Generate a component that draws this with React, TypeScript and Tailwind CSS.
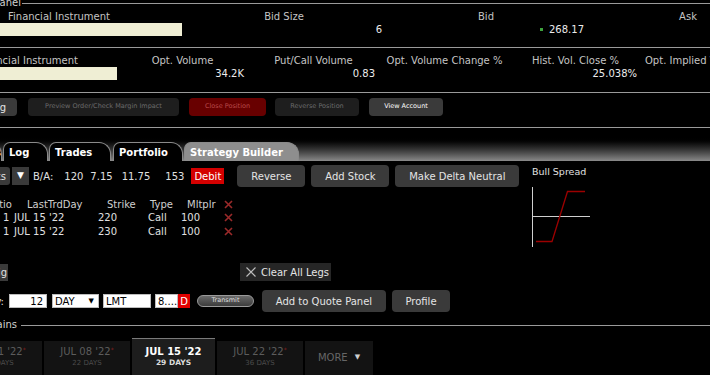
import type { ReactNode } from "react";

function Clip({ className, children }: { className: string; children: ReactNode }) {
  return <div className={`flex shrink-0 justify-end overflow-hidden whitespace-nowrap ${className}`}>{children}</div>;
}

function QuoteCell({ label, value, className = "w-[202px]" }: { label: string; value?: ReactNode; className?: string }) {
  return (
    <div className={`shrink-0 ${className}`}>
      <div className="h-[11px] text-center leading-[11px] whitespace-nowrap text-[#c4c4c4]">{label}</div>
      <div className="mt-px flex h-[13px] items-center justify-end pr-[3px] leading-[13px] text-[#ececec]">{value}</div>
    </div>
  );
}

function StatCell({ label, value, left }: { label: string; value?: string; left?: boolean }) {
  return (
    <div className="w-[131px] shrink-0">
      <div className={`h-[11px] leading-[11px] whitespace-nowrap text-[#c4c4c4] ${left ? "pl-[4px]" : "text-center"}`}>{label}</div>
      <div className="mt-px h-[13px] pr-[4px] text-right leading-[13px] text-[#ececec]">{value}</div>
    </div>
  );
}

function Tab({ label, active, className }: { label: string; active?: boolean; className: string }) {
  return (
    <div
      className={`flex h-[19px] shrink-0 items-center rounded-tl-[7px] rounded-tr-[12px] border-x border-t border-[#8a8a8a] pt-px text-[10px] font-bold whitespace-nowrap ${
        active ? "bg-[#8e8e8e] text-white" : "bg-black text-white"
      } ${className}`}
    >
      {label}
    </div>
  );
}

function DateTab({ date, days, star, active, className }: { date: string; days: string; star?: boolean; active?: boolean; className: string }) {
  return (
    <div
      className={`flex shrink-0 flex-col items-center ${
        active ? "h-[40px] border-t border-[#7a7a7a] bg-[#1d1d1d] pt-[7px]" : "h-[37px] bg-[#131313] pt-[5px]"
      } ${className}`}
    >
      <div className={`h-[12px] leading-[12px] whitespace-nowrap ${active ? "text-[10px] font-bold text-white" : "text-[10px] text-[#5c5c5c]"}`}>
        {date}
        {star ? <span className="relative -top-[3px] text-[6px] text-[#8a2020]">*</span> : null}
      </div>
      <div className={`h-[10px] leading-[10px] ${active ? "text-[7.5px] font-bold text-[#dcdcdc]" : "text-[7px] text-[#4c4c4c]"}`}>{days}</div>
    </div>
  );
}

const greyBtn = "flex shrink-0 items-center justify-center rounded-[4px] bg-[#3a3a3a] text-[10px] text-[#e4e4e4] whitespace-nowrap";

function RedX() {
  return (
    <svg width="9" height="9" viewBox="0 0 9 9">
      <path d="M1 1 L8 8 M8 1 L1 8" stroke="#9a2a2a" strokeWidth="1.6" />
    </svg>
  );
}

export default function App() {
  return (
    <div className="h-[375px] w-[710px] overflow-hidden bg-black font-['DejaVu_Sans',sans-serif] text-[10px] text-[#e0e0e0]">
      {/* quote panel */}
      <div className="-mt-[2px] flex h-[10px] items-center">
        <Clip className="w-[21px]">
          <span className="leading-[10px] text-[#d0d0d0]">Quote Panel</span>
        </Clip>
        <div className="ml-px h-px flex-1 bg-[#9a9a9a]" />
      </div>

      <div className="mt-[3px] flex">
        <div className="w-[183px] shrink-0">
          <div className="h-[11px] pl-2 leading-[11px] text-[#c4c4c4]">Financial Instrument</div>
          <div className="mt-px h-[13px] w-[182px] bg-[#efeed4]" />
        </div>
        <QuoteCell label="Bid Size" value="6" />
        <QuoteCell
          label="Bid"
          value={
            <>
              <span className="mr-[6px] h-[3px] w-[3px] bg-[#3ea33e]" />
              268.17
            </>
          }
        />
        <QuoteCell label="Ask" />
      </div>

      <div className="mt-[11px] h-px bg-[#9a9a9a]" />

      <div className="mt-[7px] flex">
        <div className="-ml-[32px] w-[149px] shrink-0">
          <div className="h-[11px] pl-2 leading-[11px] text-[#c4c4c4] whitespace-nowrap">Financial Instrument</div>
          <div className="mt-px h-[13px] w-[149px] bg-[#efeed4]" />
        </div>
        <StatCell label="Opt. Volume" value="34.2K" />
        <StatCell label="Put/Call Volume" value="0.83" />
        <StatCell label="Opt. Volume Change %" />
        <StatCell label="Hist. Vol. Close %" value="25.038%" />
        <StatCell label="Opt. Implied Vol. %" left />
      </div>

      <div className="mt-[12px] h-px bg-[#9a9a9a]" />

      {/* order buttons */}
      <div className="mt-[5px] flex h-[18px] items-center text-[6.5px]">
        <Clip className="w-[17px]">
          <div className="flex h-[18px] w-[70px] items-center justify-end rounded-[4px] bg-[#3a3a3a] pr-[11px] text-[10px] text-[#e4e4e4]">Order Log</div>
        </Clip>
        <div className="ml-[11px] flex h-[18px] w-[151px] items-center justify-center rounded-[4px] bg-[#1e1e1e] text-[#6c6c6c]">Preview Order/Check Margin Impact</div>
        <div className="ml-[10px] flex h-[18px] w-[77px] items-center justify-center rounded-[4px] bg-[#680000] text-[#b84a4a]">Close Position</div>
        <div className="ml-[9px] flex h-[18px] w-[84px] items-center justify-center rounded-[4px] bg-[#1e1e1e] text-[#6c6c6c]">Reverse Position</div>
        <div className="ml-[10px] flex h-[18px] w-[74px] items-center justify-center rounded-[4px] bg-[#3a3a3a] text-white">View Account</div>
      </div>

      <div className="mt-[11px] h-px bg-[#9a9a9a]" />

      {/* tab bar */}
      <div className="mt-[9px] flex h-[24px] items-end gap-px bg-linear-to-b from-black to-[#8a8a8a]">
        <Tab label="Orders" className="-ml-[40px] w-[42px] justify-end" />
        <Tab label="Log" className="w-[45px] pl-[5px]" />
        <Tab label="Trades" className="w-[62px] pl-[5px]" />
        <Tab label="Portfolio" className="ml-px w-[70px] pl-[5px]" />
        <Tab label="Strategy Builder" active className="w-[115px] pl-[5px]" />
      </div>

      {/* strategy builder */}
      <div className="mt-[4px] flex">
        <div className="w-[525px] shrink-0">
          <div className="flex h-[22px] items-center">
            <Clip className="w-[10px]">
              <div className="flex h-[18px] w-[48px] items-center justify-end rounded-[3px] bg-[#3a3a3a] pr-[4px]">Stocks</div>
            </Clip>
            <div className="ml-[2px] flex h-[18px] w-[17px] items-center justify-center bg-[#3a3a3a] text-[9px] text-white">▼</div>
            <span className="ml-[4px]">B/A:</span>
            <span className="ml-[11px]">120</span>
            <span className="ml-[7px]">7.15</span>
            <span className="ml-[9px]">11.75</span>
            <span className="ml-[15px]">153</span>
            <div className="ml-[7px] flex h-[16px] w-[33px] items-center justify-center bg-[#d40000] text-white">Debit</div>
            <div className={`${greyBtn} ml-[13px] h-[22px] w-[68px]`}>Reverse</div>
            <div className={`${greyBtn} ml-[6px] h-[22px] w-[78px]`}>Add Stock</div>
            <div className={`${greyBtn} ml-[6px] h-[22px] w-[124px]`}>Make Delta Neutral</div>
          </div>

          <div className="mt-[11.5px] flex h-[12px] items-center leading-[12px] text-[#cfcfcf]">
            <Clip className="w-[12px]">
              <span>Ratio</span>
            </Clip>
            <div className="w-[83px] shrink-0 pl-[15px]">LastTrdDay</div>
            <div className="w-[50px] shrink-0 pl-[12px]">Strike</div>
            <div className="w-[35px] shrink-0 pl-[5px]">Type</div>
            <div className="w-[42px] shrink-0 pl-[7px]">Mltplr</div>
            <div className="pl-[2px]">
              <RedX />
            </div>
          </div>
          {["220", "230"].map((strike) => (
            <div key={strike} className="flex h-[14px] items-center leading-[14px]">
              <div className="w-[12px] shrink-0 pl-[3px]">1</div>
              <div className="w-[83px] shrink-0 pl-[2px]">JUL 15 &apos;22</div>
              <div className="w-[50px] shrink-0 pl-[3px]">{strike}</div>
              <div className="w-[35px] shrink-0 pl-[3px]">Call</div>
              <div className="w-[42px] shrink-0 pl-px">100</div>
              <div className="pl-[2px]">
                <RedX />
              </div>
            </div>
          ))}
        </div>

        <div className="ml-[5px]">
          <div className="mt-px h-[12px] pl-[2px] text-[9.5px] leading-[12px] whitespace-nowrap">Bull Spread</div>
          <svg className="mt-[8px]" width="62" height="62" viewBox="0 0 62 62">
            <path d="M2.5 1 V61" stroke="#cfcfcf" strokeWidth="1" />
            <path d="M2.5 30.5 H60" stroke="#cfcfcf" strokeWidth="1" />
            <path d="M6 55.5 H22 L37.5 5.5 H55" fill="none" stroke="#9c0000" strokeWidth="1.3" />
          </svg>
        </div>
      </div>

      {/* legs actions */}
      <div className="mt-[15px] flex h-[18px] items-center">
        <Clip className="w-[8px]">
          <div className="flex h-[17px] w-[40px] items-center justify-end bg-[#3a3a3a] pr-px">Config</div>
        </Clip>
        <div className="ml-[232px] flex h-[18px] w-[91px] items-center gap-[5px] bg-[#262626] pl-[6px] text-[#e4e4e4]">
          <svg width="10" height="10" viewBox="0 0 10 10">
            <path d="M0.5 0.5 L9.5 9.5 M9.5 0.5 L0.5 9.5" stroke="#bdbdbd" strokeWidth="1.1" />
          </svg>
          Clear All Legs
        </div>
      </div>

      {/* order entry */}
      <div className="mt-[9px] flex h-[22px] items-center">
        <Clip className="w-[4px]">
          <span>Qty:</span>
        </Clip>
        <div className="ml-[5px] flex h-[14px] w-[38px] items-center justify-end border border-[#bdbdbd] bg-white pr-[3px] text-black">12</div>
        <div className="ml-[5px] flex h-[14px] w-[47px] items-center justify-between border border-[#bdbdbd] bg-white pr-[4px] pl-[2px] text-black">
          DAY
          <span className="text-[7px]">▼</span>
        </div>
        <div className="ml-[4px] flex h-[14px] w-[48px] items-center border border-[#bdbdbd] bg-white pl-[2px] text-black">LMT</div>
        <div className="ml-[4px] flex h-[14px] w-[23px] items-center border border-[#bdbdbd] bg-white pl-[2px] text-black">8....</div>
        <div className="flex h-[14px] w-[12px] items-center justify-center bg-[#e00000] text-white">D</div>
        <div className="ml-[7px] flex h-[12px] w-[57px] items-center justify-center rounded-full border border-[#9a9a9a] bg-linear-to-b from-[#6a6a6a] to-[#3c3c3c] text-[6.5px] text-[#dedede]">
          Transmit
        </div>
        <div className={`${greyBtn} ml-[8px] h-[22px] w-[124px]`}>Add to Quote Panel</div>
        <div className={`${greyBtn} ml-[6px] h-[22px] w-[58px]`}>Profile</div>
      </div>

      {/* option chains */}
      <div className="mt-[8px] flex h-[10px] items-center">
        <Clip className="w-[17px]">
          <span className="leading-[10px] text-[#d0d0d0]">Option Chains</span>
        </Clip>
        <div className="ml-[4px] h-px flex-1 bg-[#9a9a9a]" />
      </div>

      <div className="mt-[8px] flex h-[40px] items-end gap-[2px]">
        <DateTab date="JUL 01 '22" days="15 DAYS" star className="-ml-[44px] w-[86px]" />
        <DateTab date="JUL 08 '22" days="22 DAYS" star className="w-[86px]" />
        <DateTab date="JUL 15 '22" days="29 DAYS" active className="w-[83px]" />
        <DateTab date="JUL 22 '22" days="36 DAYS" star className="w-[86px]" />
        <div className="flex h-[37px] w-[68px] shrink-0 items-center justify-center gap-[7px] bg-[#131313] pb-[4px] text-[10px] text-[#666666]">
          MORE
          <span className="text-[7px] text-[#cfcfcf]">▼</span>
        </div>
      </div>
    </div>
  );
}
